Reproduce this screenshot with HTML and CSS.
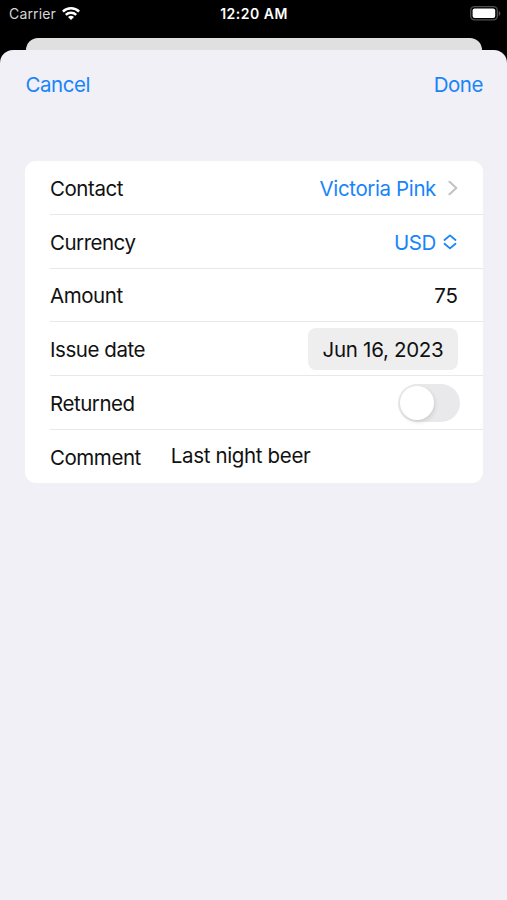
FILE: index.html
```html
<!DOCTYPE html>
<html lang="en">
<head>
    <meta charset="UTF-8">
    <meta name="viewport" content="width=device-width, initial-scale=1.0">
    <title>Edit debt</title>
    <link rel="stylesheet" href="styles.css">
</head>
<body>
    <div class="status-bar">
        <div class="carrier">
            <span class="carrier-name">Carrier</span>
            <svg width="18" height="14" viewBox="0 0 18 14" fill="none" stroke="#fff" stroke-width="2.5">
                <path d="M0.9 4.6a11.5 11.5 0 0 1 16.2 0"/>
                <path d="M3.8 7.8a7.4 7.4 0 0 1 10.4 0"/>
                <path d="M9 13.1L6 10.1a4.3 4.3 0 0 1 6 0z" fill="#fff" stroke="none"/>
            </svg>
        </div>
        <span class="time">12:20 AM</span>
        <svg class="battery" width="31" height="15" viewBox="0 0 31 15">
            <rect x="0.7" y="0.7" width="26.6" height="13.2" rx="3.8" fill="none" stroke="#505050" stroke-width="1.3"/>
            <rect x="2.6" y="2.6" width="22.6" height="9.4" rx="2" fill="#fff"/>
            <path d="M28.7 5v5c1.2-.4 1.7-1.4 1.7-2.5S29.9 5.4 28.7 5z" fill="#505050"/>
        </svg>
    </div>

    <div class="back-sheet"></div>

    <div class="sheet">
        <div class="nav">
            <a class="nav-link">Cancel</a>
            <a class="nav-link">Done</a>
        </div>

        <div class="form">
            <div class="row">
                <span class="label">Contact</span>
                <span class="value link">Victoria Pink</span>
                <svg class="chevron" width="10" height="16" viewBox="0 0 10 16" fill="none" stroke="#c4c4c7" stroke-width="2.2" stroke-linecap="round" stroke-linejoin="round">
                    <path d="M1.5 1.8L8.3 8l-6.8 6.2"/>
                </svg>
            </div>
            <div class="row">
                <span class="label currency">Currency</span>
                <span class="value link">USD</span>
                <svg class="updown" width="14" height="16" viewBox="0 0 14 16" fill="none" stroke="#1884fa" stroke-width="1.8" stroke-linecap="round" stroke-linejoin="round">
                    <path d="M1.5 6L7 1.4 12.5 6M1.5 9.8L7 14.4l5.5-4.6"/>
                </svg>
            </div>
            <div class="row">
                <span class="label">Amount</span>
                <span class="value number">75</span>
            </div>
            <div class="row">
                <span class="label">Issue date</span>
                <span class="value date">Jun 16, 2023</span>
            </div>
            <div class="row">
                <span class="label">Returned</span>
                <span class="value toggle"><span class="knob"></span></span>
            </div>
            <div class="row">
                <span class="label">Comment</span>
                <span class="note">Last night beer</span>
            </div>
        </div>
    </div>
</body>
</html>
```

FILE: styles.css
```css
* {
    box-sizing: border-box;
}
body {
    margin: 0;
    height: 900px;
    display: flex;
    flex-direction: column;
    overflow: hidden;
    background-color: black;
    color: #111;
    font-family: Inter, 'Liberation Sans', sans-serif;
    font-size: 20.5px;
    letter-spacing: -0.45px;
    line-height: 24px;
    white-space: nowrap;
}
svg {
    display: block;
    flex: none;
}

/* status bar */
.status-bar {
    display: grid;
    grid-template-columns: 1fr auto 1fr;
    align-items: center;
    height: 38px;
    padding: 0 6px 11px 9px;
    color: white;
    font-size: 14px;
    letter-spacing: 0;
}
.carrier {
    display: flex;
    align-items: center;
    gap: 6px;
}
.carrier-name {
    color: #d6d6d6;
    letter-spacing: 0.15px;
}
.time {
    font-weight: 600;
    letter-spacing: 0.5px;
    margin-right: 2px;
}
.battery {
    justify-self: end;
}

/* sheets */
.back-sheet {
    height: 12px;
    margin: 0 25px 0 26px;
    background-color: #e0e0e0;
    border-radius: 12px 12px 0 0;
}
.sheet {
    flex: 1;
    background-color: #f1f0f6;
    border-radius: 13px 13px 0 0;
    padding: 0 24px 0 25px;
}
.nav {
    display: flex;
    justify-content: space-between;
    height: 111px;
    padding: 23px 0 0 0.5px;
}
.nav-link {
    color: #1884fa;
}

/* form */
.form {
    background-color: white;
    border-radius: 11px;
    padding-left: 25px;
}
.row {
    display: flex;
    align-items: center;
    height: 53.8px;
    padding-top: 2px;
    padding-right: 25px;
    border-bottom: 1px solid #e8e8ea;
}
.row:last-child {
    height: 53px;
    border-bottom: none;
}
.label {
    padding-top: 1px;
}
.currency {
    letter-spacing: -0.5px;
}
.value {
    margin-left: auto;
}
.link {
    color: #1884fa;
    padding-top: 1px;
    letter-spacing: -0.38px;
}
.chevron {
    margin-left: 12px;
}
.updown {
    margin-left: 7px;
    margin-right: 1px;
}
.number {
    padding-top: 1px;
    letter-spacing: 0;
}
.date {
    display: flex;
    align-items: center;
    justify-content: center;
    width: 150px;
    height: 42px;
    margin-bottom: 2px;
    padding-top: 2px;
    border-radius: 8px;
    background-color: #eeeeef;
    letter-spacing: -0.28px;
}
.toggle {
    display: flex;
    align-items: center;
    width: 62px;
    height: 38px;
    margin-right: -2px;
    margin-bottom: 2px;
    padding: 2px;
    border-radius: 19px;
    background-color: #e9e9eb;
}
.knob {
    width: 34px;
    height: 34px;
    border-radius: 50%;
    background-color: white;
    box-shadow: 1px 2px 4px rgba(0, 0, 0, 0.12);
}
.note {
    margin-left: 30px;
    padding-bottom: 2px;
    letter-spacing: -0.35px;
}
```
